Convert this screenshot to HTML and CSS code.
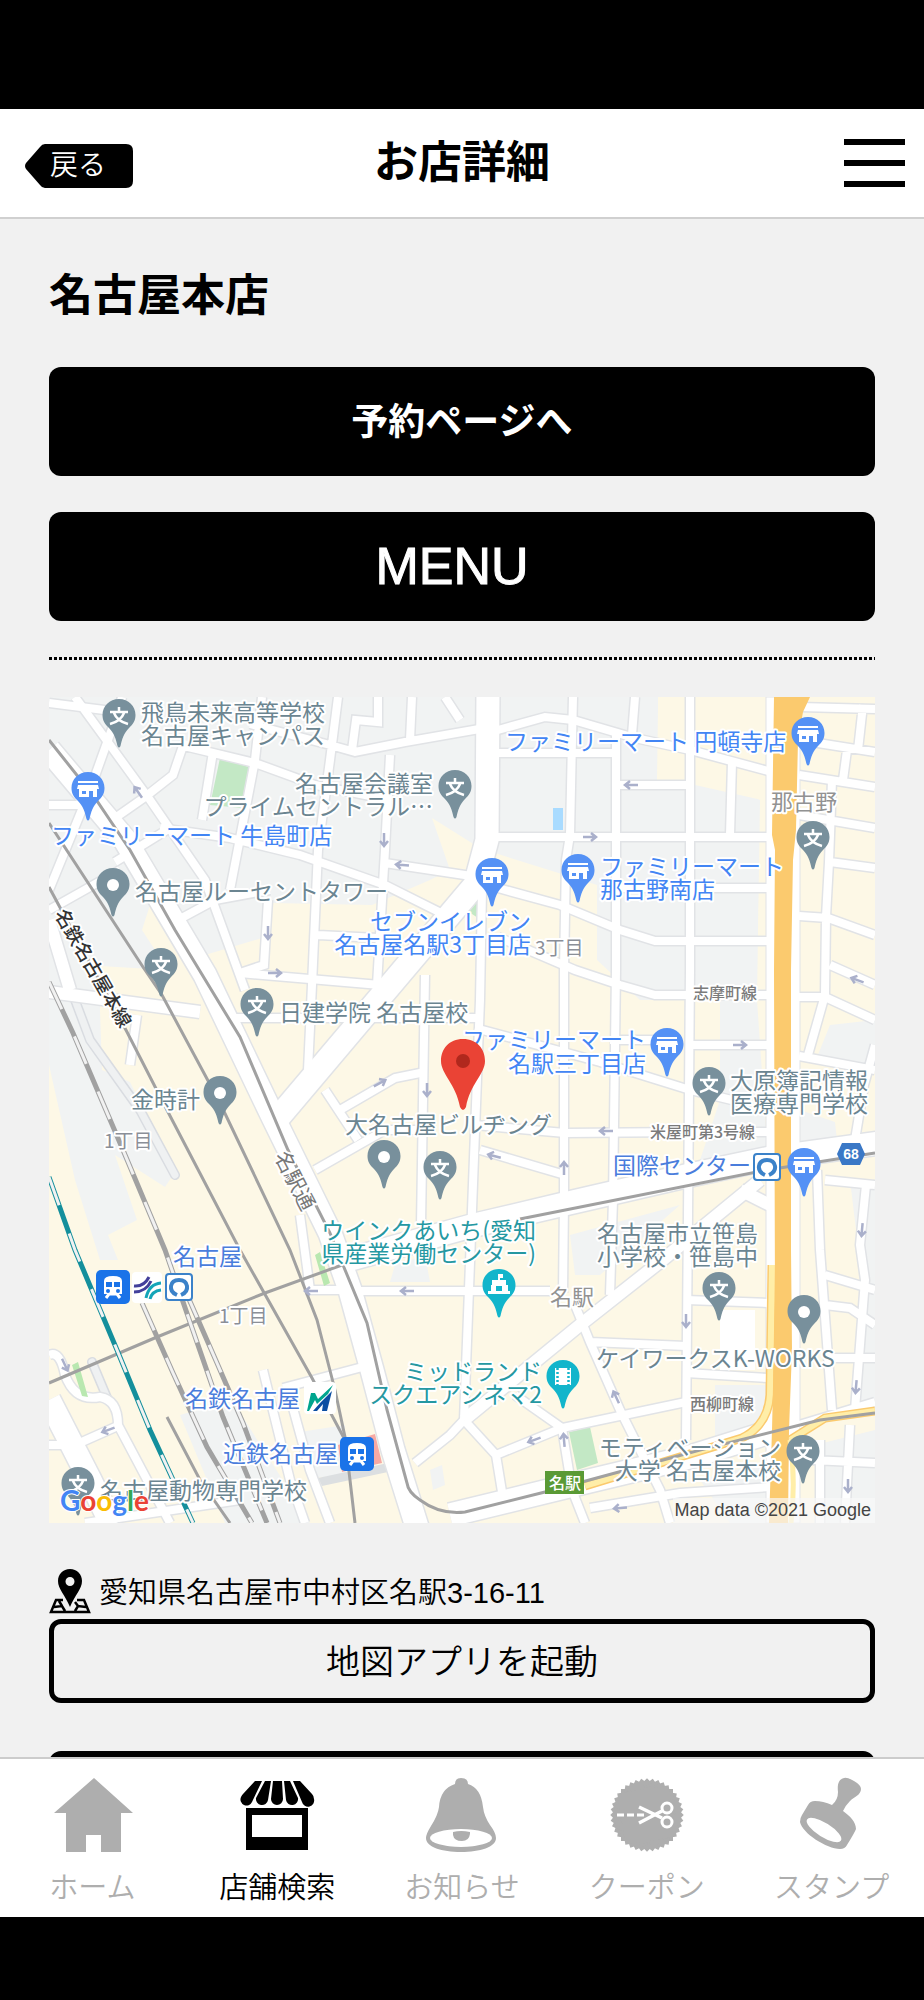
FILE: index.html
```html
<!DOCTYPE html>
<html lang="ja">
<head>
  <meta charset="UTF-8">
  <meta name="viewport" content="width=device-width, initial-scale=1.0">
  <title>お店詳細</title>
  <link rel="stylesheet" href="styles.css">
</head>
<body>
  <div class="app">
    <header class="header">
      <a class="back" href="#">
        <svg class="back-shape" viewBox="0 0 108 44" aria-hidden="true"><path d="M20 0H101Q108 0 108 7V37Q108 44 101 44H20Q17 44 15 41L1 25Q-1 22 1 19L15 3Q17 0 20 0Z"/></svg>
        <span>戻る</span>
      </a>
      <h1>お店詳細</h1>
      <button class="hamburger" type="button" aria-label="メニュー"><i></i><i></i><i></i></button>
    </header>

    <main class="main">
      <h2>名古屋本店</h2>
      <div class="actions">
        <a class="btn" href="#">予約ページへ</a>
        <a class="btn btn-en" href="#">MENU</a>
      </div>
      <hr class="dots">

      <svg class="map" viewBox="49 697 826 826" role="img" aria-label="名古屋本店の地図">
        <defs>
          <path id="pin" d="M0-17C9.500-17 16.500-10 16.500-1C16.500 5 14 8 10 12C5 17 3 23 1.500 30Q0 33-1.500 30C-3 23-5 17-10 12C-14 8-16.500 5-16.500-1C-16.500-10-9.500-17 0-17Z"/>
          <g id="school"><use href="#pin" fill="#78909c"/><path d="M0-9V-4M-9-4H9M-5-3Q-2 5 9 8M5-3Q2 5-9 8" fill="none" stroke="#fff" stroke-width="2.500"/></g>
          <g id="place"><use href="#pin" fill="#78909c"/><circle r="6" fill="#fff"/></g>
          <g id="shop"><use href="#pin" fill="#5491f5"/><path d="M-10-8H10V-6H-10ZM-10-4H10L11 0H-11ZM-9 0H9V8H5V2H1V8H-9ZM-6 2V5H-2V2Z" fill="#fff" fill-rule="evenodd"/></g>
          <path id="arrow" d="M-7 0H6M1-4L6 0L1 4" fill="none" stroke="#aab0cb" stroke-width="2.500"/>
          <g id="train"><rect width="34" height="34" rx="5" fill="#1a73e8"/><path d="M8 11Q8 6 17 6Q26 6 26 11V24H8ZM10 12V17H16V12ZM18 12V17H24V12Z" fill="#fff" fill-rule="evenodd"/><path d="M10 28L13 24H21L24 28" fill="none" stroke="#fff" stroke-width="3"/><circle cx="12" cy="21" r="2" fill="#1a73e8"/><circle cx="22" cy="21" r="2" fill="#1a73e8"/></g>
          <g id="metro"><rect x="1" y="1" width="26" height="26" rx="3" fill="#fff" stroke="#3b82c9" stroke-width="2"/><path d="M12 22Q5 19 6 13Q7 7 14 7Q21 7 22 13Q23 19 16 22" fill="none" stroke="#3b82c9" stroke-width="4"/></g>

          <!-- 道路 -->
          <g id="streets">
            <path d="M573 697L572 740L570 835L566 860L564 970L564 1200L563 1293M635 697L632 735M616 735V970L613 1200L610 1295M690 697V970L688 1215L686 1440M732 762L730 835"/>
            <path d="M498 753H615M498 730L545 717L573 720L635 738L690 750L772 772M618 785H690M498 837H772M498 888L560 905L620 930L655 941H770M616 888H772M498 937L575 970L620 985L655 995H772M690 1045H770M610 1040H670M475 1028L600 1062L690 1090L740 1102M475 1125L565 1133L690 1132H768M480 1150L565 1175"/>
            <path d="M482 890L480 1000L472 1210L464 1420M425 975L421 1225M345 1291H550M590 1342L686 1346M686 1300L770 1303M686 1373L768 1378M575 1305L590 1342L620 1410L660 1490L670 1523M590 1508L680 1493L770 1487M515 1395L562 1428L572 1490L585 1523M464 1420L496 1455L505 1510M496 1455L562 1428L686 1402"/>
            <path d="M800 707L875 709M863 705L858 750M847 750L843 780M799 740L875 752M799 775L875 787M799 815L875 828M832 780L829 862L826 917L825 995L808 1055M830 862L875 868M799 916L828 918L875 935M799 997H825L875 1020M799 1056L875 1070M830 965L875 985M875 1045L864 1085L855 1140M817 1170L820 1250L832 1410M875 1185L825 1180M866 1185L860 1245L865 1280L855 1410M825 1275L875 1290M825 1305L850 1308L875 1325M825 1358H875M799 1425L875 1402M812 1460L875 1463M850 1425L845 1523M820 1440V1523"/>
            <path d="M49 703L120 712M122 697L118 712L90 790L49 890M180 745L255 763L315 785L390 800M250 724L330 745L355 752L405 742L485 728M185 740L173 775L145 797L115 818M213 752L202 820M262 697L255 760L230 890M338 697L330 760L318 850L312 985L308 1070M390 755L385 850L377 985M378 697V722L356 720L352 750M412 697L410 740M445 697L460 720M49 805H85M160 828L230 838L300 855L385 885L445 915M115 862L170 828M49 910L120 870M178 920L215 900L270 890M268 900L264 965L240 973M385 863L478 877M318 935L378 938"/>
            <path d="M75 697L110 745L150 800L205 880L245 990M240 973L380 985M232 1018H478M340 1110L395 1078L425 1072M325 1090L358 1140M315 1170L385 1130L425 1130M137 1015L130 1065M263 1370L290 1480L305 1523M283 1388L370 1365M288 1390L310 1470L330 1523M49 1355Q60 1350 65 1375Q75 1402 100 1397Q118 1400 118 1425L170 1523M75 1445L120 1425M49 1445H85M85 1523L240 1500M415 1463L450 1435L464 1420M300 1215L310 1290H340"/>
          </g>
          <g id="avenues">
            <path d="M49 750L125 840L205 975L273 1117L330 1233L350 1290L372 1370L393 1450L418 1530"/>
            <path d="M488 690L487 840L475 885L278 1118"/>
            <path d="M340 1262L475 1225L560 1205L690 1175L770 1158L880 1143"/>
            <path d="M450 1515L585 1482L690 1457L770 1432"/>
            <path d="M49 1400L90 1480L112 1525"/>
          </g>
          <g id="diagonals">
            <path d="M464 1420L580 1325L660 1262L760 1180M740 1190L770 1205M49 920L70 990M49 992L200 1012"/>
          </g>
          <path id="yellow" d="M772 1265L770 1395Q768 1425 742 1438L585 1486M875 1411L825 1418L790 1440"/>
          <path id="railD" d="M49 982L73 1033L123 1150L165 1250L223 1417L267 1523"/>
          <path id="railE" d="M142 1303L173 1373L207 1447L252 1523"/>
          <path id="railF" d="M185 1290L217 1363L243 1423L280 1523"/>
          <path id="railT" d="M49 1177L75 1250L117 1350L150 1430L193 1523"/>
        </defs>

        <rect x="49" y="697" width="826" height="826" fill="#fdf8e6"/>
        <g fill="#f1f3f3">
          <path d="M49 697H658V780H725L760 800L757 1000L768 1160H700L720 1100V1000H640L597 960V885L498 854L475 845L432 818L450 870L430 880L372 905L272 903L262 938L205 955L190 970L150 905L142 930L168 970L100 966V1010L102 1070L130 1082L175 1172L165 1187L115 1155L137 1220L108 1235L118 1260H100L75 1180L49 1065Z"/>
          <path d="M830 1025L875 1020V1065L815 1062ZM800 1110L835 1122L838 1150H800ZM850 1180H875V1400H850L862 1280ZM815 1445L875 1430V1523H815ZM715 1385H768V1420L715 1438ZM570 1235L680 1205L600 1275H575ZM395 1265L425 1255L430 1282H390ZM700 1480L770 1460V1523H730Z"/>
          <path d="M180 1415L232 1400L310 1523H225ZM300 1432L345 1425V1475L312 1478ZM430 1470L442 1465L445 1485L433 1490Z"/>
        </g>
        <path d="M658 707L690 715V780H657ZM695 757L767 775V935H758L762 800L695 785ZM730 697H767V732L730 725ZM640 1005L720 1000V1100L640 1080Z" fill="#fdf8e6"/>
        <path d="M220 758L249 767L243 808L210 805ZM569 1432L590 1427L598 1463L577 1470ZM466 910L480 898L478 918Z" fill="#c3e8c5"/>
        <rect x="553" y="808" width="10" height="22" fill="#a9dbff"/>
        <path d="M338 1445L375 1434L382 1463L342 1472Z" fill="#f6a9a4"/>
        <path d="M318 1478L388 1463V1472L322 1486Z" fill="#dcdfe1"/>

        <path class="lane-edge" d="M75 1000L90 1040L140 1110L175 1175M92 1362L108 1400"/>
        <path class="lane" d="M75 1000L90 1040L140 1110L175 1175M92 1362L108 1400"/>
        <use class="road-edge w-street" href="#streets"/>
        <use class="road-edge w-diagonal" href="#diagonals"/>
        <use class="road-edge w-avenue" href="#avenues"/>
        <path d="M766 697H800V1523H766Z" fill="#fff" stroke="#e1e3e6"/>
        <use class="road w-street" href="#streets"/>
        <use class="road w-diagonal" href="#diagonals"/>
        <use class="road w-avenue" href="#avenues"/>
        <path d="M720 1310H755V1370H720Z" fill="#fff"/>
        <path d="M72 1365L78 1362L88 1397L82 1396ZM315 1255L320 1252L330 1283L324 1286Z" fill="#b9e8b0"/>

        <use class="yellow-edge" href="#yellow"/>
        <use class="yellow" href="#yellow"/>
        <path d="M774 697H810L803 712L798 740L796 830L793 860L791 970V1250L792 1350L789 1430L788 1523H769L772 1430L775 1300L774 970L775 850L772 835Z" fill="#fbca6e"/>
        <path d="M790 1440Q796 1480 791 1523" fill="none" stroke="#ffeea8" stroke-width="5"/>

        <g class="rail">
          <path d="M49 740L95 798L130 850L175 930L240 1037L288 1150L330 1233L343 1265L367 1323L387 1410L407 1483Q408 1492 420 1500Q440 1515 465 1512L545 1492L700 1450L820 1420L875 1413"/>
          <path d="M49 823L143 967L162 995L220 1103L290 1250L317 1320L335 1390L345 1437L355 1523"/>
          <path d="M49 887L127 1032L168 1112L240 1250L312 1378L345 1440"/>
          <path d="M49 1383L157 1337L265 1293L342 1265M520 1219L767 1170L875 1153"/>
          <path d="M167 1417L200 1480L230 1523"/>
        </g>
        <use class="rail-base" href="#railD"/><use class="rail-dash" href="#railD"/>
        <use class="rail-base" href="#railE"/><use class="rail-dash" href="#railE"/>
        <use class="rail-base" href="#railF"/><use class="rail-dash" href="#railF"/>
        <use class="rail-base teal" href="#railT"/><use class="rail-dash" href="#railT"/>

        <use href="#arrow" transform="translate(138 792) rotate(-125)"/>
        <use href="#arrow" transform="translate(384 840) rotate(90)"/>
        <use href="#arrow" transform="translate(402 865) rotate(185)"/>
        <use href="#arrow" transform="translate(268 933) rotate(90)"/>
        <use href="#arrow" transform="translate(275 973)"/>
        <use href="#arrow" transform="translate(631 785) rotate(180)"/>
        <use href="#arrow" transform="translate(590 837)"/>
        <use href="#arrow" transform="translate(380 1083) rotate(-28)"/>
        <use href="#arrow" transform="translate(427 1090) rotate(90)"/>
        <use href="#arrow" transform="translate(740 1045)"/>
        <use href="#arrow" transform="translate(857 980) rotate(200)"/>
        <use href="#arrow" transform="translate(606 1131) rotate(180)"/>
        <use href="#arrow" transform="translate(494 1156) rotate(195)"/>
        <use href="#arrow" transform="translate(564 1168) rotate(-90)"/>
        <use href="#arrow" transform="translate(862 1230) rotate(95)"/>
        <use href="#arrow" transform="translate(407 1291) rotate(180)"/>
        <use href="#arrow" transform="translate(311 1291) rotate(180)"/>
        <use href="#arrow" transform="translate(686 1321) rotate(90)"/>
        <use href="#arrow" transform="translate(616 1397) rotate(-115)"/>
        <use href="#arrow" transform="translate(564 1440) rotate(-95)"/>
        <use href="#arrow" transform="translate(534 1440) rotate(160)"/>
        <use href="#arrow" transform="translate(620 1508) rotate(175)"/>
        <use href="#arrow" transform="translate(856 1387) rotate(95)"/>
        <use href="#arrow" transform="translate(848 1486) rotate(90)"/>
        <use href="#arrow" transform="translate(65 1365) rotate(65)"/>
        <use href="#arrow" transform="translate(108 1430) rotate(160)"/>

        <use href="#school" x="119" y="716"/>
        <use href="#school" x="455" y="787"/>
        <use href="#school" x="813" y="838"/>
        <use href="#school" x="161" y="965"/>
        <use href="#school" x="257" y="1005"/>
        <use href="#school" x="709" y="1084"/>
        <use href="#school" x="440" y="1168"/>
        <use href="#school" x="719" y="1289"/>
        <use href="#school" x="803" y="1452"/>
        <use href="#school" x="78" y="1484"/>
        <use href="#place" x="113" y="885"/>
        <use href="#place" x="220" y="1093"/>
        <use href="#place" x="384" y="1157"/>
        <use href="#place" x="804" y="1312"/>
        <use href="#shop" x="88" y="789"/>
        <use href="#shop" x="808" y="734"/>
        <use href="#shop" x="492" y="875"/>
        <use href="#shop" x="578" y="871"/>
        <use href="#shop" x="667" y="1045"/>
        <use href="#shop" x="804" y="1165"/>
        <g transform="translate(499 1286)"><use href="#pin" fill="#12b5cb"/><path d="M-1-12H4V-8H1V-6H7V-1H9V5H11V8H-11V5H-8V-1H-7V-6H-1ZM-3 0V5H3V0Z" fill="#fff" fill-rule="evenodd"/></g>
        <g transform="translate(563 1377)"><use href="#pin" fill="#12b5cb"/><rect x="-8" y="-9" width="16" height="17" fill="#fff"/><path d="M-5.500-9V8M5.500-9V8" stroke="#12b5cb" stroke-width="2.500" stroke-dasharray="2 2"/></g>

        <g class="label poi">
          <text x="141" y="721">飛鳥未来高等学校</text>
          <text x="141" y="744">名古屋キャンパス</text>
          <text class="end" x="433" y="792">名古屋会議室</text>
          <text class="end" x="433" y="815">プライムセントラル…</text>
          <text x="135" y="900">名古屋ルーセントタワー</text>
          <text x="279" y="1021">日建学院 名古屋校</text>
          <text x="730" y="1089">大原簿記情報</text>
          <text x="730" y="1112">医療専門学校</text>
          <text x="345" y="1133">大名古屋ビルヂング</text>
          <text x="131" y="1108">金時計</text>
          <text x="597" y="1242">名古屋市立笹島</text>
          <text x="597" y="1265">小学校・笹島中</text>
          <text x="596" y="1367">ケイワークスK-WORKS</text>
          <text class="end" x="781" y="1456">モティベーション</text>
          <text class="end" x="781" y="1479">大学 名古屋本校</text>
          <text x="100" y="1499">名古屋動物専門学校</text>
        </g>
        <g class="label store">
          <text x="51" y="844">ファミリーマート 牛島町店</text>
          <text x="505" y="750">ファミリーマート 円頓寺店</text>
          <text x="600" y="875">ファミリーマート</text>
          <text x="600" y="898">那古野南店</text>
          <text class="end" x="531" y="930">セブンイレブン</text>
          <text class="end" x="531" y="953">名古屋名駅3丁目店</text>
          <text class="end" x="646" y="1048">ファミリーマート</text>
          <text class="end" x="646" y="1072">名駅三丁目店</text>
        </g>
        <g class="label station">
          <text x="613" y="1174">国際センター</text>
          <text x="173" y="1265">名古屋</text>
          <text x="185" y="1407">名鉄名古屋</text>
          <text x="223" y="1462">近鉄名古屋</text>
        </g>
        <g class="label culture">
          <text class="end" x="536" y="1239">ウインクあいち(愛知</text>
          <text class="end" x="536" y="1262">県産業労働センター)</text>
          <text class="end" x="542" y="1380">ミッドランド</text>
          <text class="end" x="542" y="1403">スクエアシネマ2</text>
        </g>
        <g class="label area">
          <text x="771" y="810">那古野</text>
          <text x="550" y="1305">名駅</text>
        </g>
        <g class="label block">
          <text x="535" y="955">3丁目</text>
          <text x="104" y="1148">1丁目</text>
          <text x="219" y="1323">1丁目</text>
        </g>
        <g class="label street">
          <text x="693" y="999">志摩町線</text>
          <text x="650" y="1138">米屋町第3号線</text>
          <text x="690" y="1410">西柳町線</text>
        </g>
        <text class="label line-name" transform="translate(54 914) rotate(60)">名鉄名古屋本線</text>
        <text class="label avenue-name" transform="translate(274 1156) rotate(63)">名駅通</text>

        <use href="#train" x="96" y="1270"/>
        <use href="#train" x="340" y="1437"/>
        <use href="#metro" x="165" y="1273"/>
        <use href="#metro" x="753" y="1153"/>
        <rect x="132" y="1272" width="30" height="31" rx="4" fill="#fff"/>
        <path d="M134 1286Q144 1287 149 1277M134 1292Q146 1292 151 1281" fill="none" stroke="#43409a" stroke-width="3"/>
        <path d="M146 1298Q149 1284 161 1283M150 1299Q152 1291 161 1290" fill="none" stroke="#14a5b8" stroke-width="3"/>
        <rect x="304" y="1382" width="32" height="32" rx="4" fill="#fff"/>
        <path d="M307 1411L311 1393H315L318 1399L333 1385L328 1394L317 1404L315 1400L309 1411Z" fill="#00a58e"/>
        <path d="M313 1411L321 1402L332 1391L327 1411H322L323 1404L317 1411Z" fill="#0b4ea2"/>
        <path d="M842 1143H860L865 1154L860 1165H842L837 1154Z" fill="#3a78c6"/>
        <text class="route-no" x="851" y="1159">68</text>
        <rect x="545" y="1471" width="39" height="23" fill="#5a9a35"/>
        <text class="exit" x="565" y="1489">名駅</text>

        <path d="M463 1039C477 1039 485 1049 485 1061C485 1074 470 1084 466 1107Q463 1113 460 1107C456 1084 441 1074 441 1061C441 1049 449 1039 463 1039Z" fill="#ea4335"/>
        <circle cx="463" cy="1061" r="7" fill="#b0281d"/>

        <text class="google" x="60" y="1511"><tspan fill="#4285f4">G</tspan><tspan fill="#ea4335">o</tspan><tspan fill="#fbbc04">o</tspan><tspan fill="#4285f4">g</tspan><tspan fill="#34a853">l</tspan><tspan fill="#ea4335">e</tspan></text>
        <rect x="673" y="1498" width="202" height="25" fill="#f8f8f8" fill-opacity="0.7"/>
        <text class="credit" x="871" y="1516">Map data ©2021 Google</text>
      </svg>

      <p class="address">
        <svg class="address-icon" viewBox="0 0 42 45" aria-hidden="true">
          <path d="M21 0C28 0 33 5 33 12C33 20 26 26 21 38C16 26 9 20 9 12C9 5 14 0 21 0ZM21 8A4.500 4.500 0 0 0 21 17A4.500 4.500 0 0 0 21 8Z" fill-rule="evenodd"/>
          <path d="M14 31H7L2 43H40L35 31H28M5 38L13 37L16 42M10 32L13 37M37 38L29 37L26 42M29 37L26 33" fill="none" stroke="#000" stroke-width="2.500"/>
        </svg>
        <span>愛知県名古屋市中村区名駅3-16-11</span>
      </p>
      <button class="btn-line" type="button">地図アプリを起動</button>
      <button class="btn-line next" type="button" aria-label="電話をかける"></button>
    </main>

    <nav class="nav">
      <a href="#">
        <svg viewBox="0 0 80 80" aria-hidden="true"><path d="M42 3L81 38H69V77H49V60H34V77H14V38H2Z"/></svg>
        <span>ホーム</span>
      </a>
      <a class="active" href="#">
        <svg viewBox="0 0 80 80" aria-hidden="true">
          <path d="M18 6H25L15 27A6 6 0 0 1 4 22Q5 20 6 19ZM28 6H34L31 25A6 6 0 0 1 19 23ZM36 6H45L46 24A6 6 0 0 1 34 24ZM47 6H53L61 23A6 6 0 0 1 49 25ZM56 6H63L75 19Q77 21 77 24A6 6 0 0 1 65 27Z"/>
          <path d="M9 33H71V75H9ZM15 40V62H65V40Z" fill-rule="evenodd"/>
        </svg>
        <span>店舗検索</span>
      </a>
      <a href="#">
        <svg viewBox="0 0 80 80" aria-hidden="true">
          <path d="M33 9Q33 3 39 3Q46 3 46 9Q59 13 61 32Q62 41 68 50Q74 58 74 63C74 72 58 77 39 77C20 77 4 72 4 63Q4 59 9 51Q16 40 17 32Q18 14 33 9Z"/>
          <ellipse cx="39" cy="63" rx="31" ry="9" fill="#fff"/>
          <path d="M31 57Q39 55 48 57V59Q47 66 40 66Q32 66 31 60Z"/>
        </svg>
        <span>お知らせ</span>
      </a>
      <a href="#">
        <svg viewBox="0 0 80 80" aria-hidden="true">
          <defs><rect id="tooth" x="14" y="14" width="52" height="52"/></defs>
          <use href="#tooth"/>
          <use href="#tooth" transform="rotate(9 40 40)"/>
          <use href="#tooth" transform="rotate(18 40 40)"/>
          <use href="#tooth" transform="rotate(27 40 40)"/>
          <use href="#tooth" transform="rotate(36 40 40)"/>
          <use href="#tooth" transform="rotate(45 40 40)"/>
          <use href="#tooth" transform="rotate(54 40 40)"/>
          <use href="#tooth" transform="rotate(63 40 40)"/>
          <use href="#tooth" transform="rotate(72 40 40)"/>
          <use href="#tooth" transform="rotate(81 40 40)"/>
          <g fill="none" stroke="#fff" stroke-width="3">
            <path d="M10 40H37" stroke-dasharray="7 3"/>
            <path d="M32 32L55 43M32 48L55 36" stroke-width="3.500"/>
            <circle cx="60" cy="33" r="5"/>
            <circle cx="60" cy="47" r="5"/>
          </g>
        </svg>
        <span>クーポン</span>
      </a>
      <a href="#">
        <svg viewBox="0 0 80 80" aria-hidden="true">
          <path d="M52 3Q55 2 62 6Q69 10 69 14C69 20 62 22 58 26Q53 31 51 36C58 41 64 47 64 54Q63 57 55 70Q53 74 48 74C35 74 10 58 8 47Q8 43 10 40L16 30Q18 26 23 26Q31 26 40 30Q46 25 46 17C45 9 47 4 52 3Z"/>
          <ellipse cx="32" cy="55" rx="20" ry="7" transform="rotate(32 32 55)" fill="#fff"/>
        </svg>
        <span>スタンプ</span>
      </a>
    </nav>
  </div>
</body>
</html>
```
FILE: styles.css
```css
* { box-sizing: border-box; }
body {
  margin: 0;
  background: #000;
  color: #000;
  font-family: "Liberation Sans", "Noto Sans CJK JP", sans-serif;
}
a { color: inherit; text-decoration: none; }

.app {
  display: flex;
  flex-direction: column;
  height: 100vh;
  padding: 109px 0 83px;
}

/* ヘッダー */
.header {
  display: grid;
  grid-template-columns: 1fr auto 1fr;
  align-items: center;
  flex: none;
  height: 110px;
  padding: 0 19px;
  background: #fff;
  border-bottom: 2px solid #d0d0d0;
}
.header h1 { margin: 0; font-size: 44px; line-height: 64px; }
.back {
  position: relative;
  justify-self: start;
  width: 108px;
  margin: 6px 0 0 6px;
  padding-left: 25px;
  color: #fff;
  font-size: 28px;
  font-weight: 350;
  line-height: 44px;
}
.back-shape { position: absolute; top: 0; left: 0; width: 100%; height: 100%; }
.back span { position: relative; }
.hamburger {
  display: flex;
  flex-direction: column;
  justify-self: end;
  gap: 15px;
  width: 61px;
  padding: 0;
  border: 0;
  background: none;
}
.hamburger i { height: 6px; background: #000; }

/* 店舗情報 */
.main {
  flex: 1;
  min-height: 0;
  overflow: hidden;
  padding: 44px 49px 0;
  background: #f1f1f1;
}
.main h2 { margin: 0 0 38px; font-size: 44px; line-height: 66px; }
.actions { display: flex; flex-direction: column; gap: 36px; }
.btn {
  height: 109px;
  border-radius: 12px;
  background: #000;
  color: #fff;
  font-size: 37px;
  font-weight: 700;
  line-height: 112px;
  text-align: center;
}
.btn-en {
  padding-right: 20px;
  font-size: 52px;
  font-weight: 400;
  line-height: 108px;
  -webkit-text-stroke: 1px #fff;
}
.dots {
  height: 3px;
  margin: 36px 0 37px;
  border: 0;
  background: repeating-linear-gradient(90deg, #000 0 3px, #f1f1f1 3px 5px);
}
.address {
  display: flex;
  gap: 8px;
  margin: 46px 0 0;
  height: 50px;
  font-size: 29px;
  line-height: 48px;
  font-weight: 350;
}
.address-icon { flex: none; width: 42px; height: 45px; }
.btn-line {
  display: block;
  width: 100%;
  height: 84px;
  padding: 0 0 4px;
  border: 5px solid #000;
  border-radius: 12px;
  background: none;
  color: #000;
  font-family: inherit;
  font-size: 34px;
  font-weight: 350;
}
.next { margin-top: 48px; background: #000; }

/* 地図 */
.map { display: block; width: 100%; }
.road, .road-edge, .lane, .lane-edge, .yellow, .yellow-edge,
.rail, .rail-base, .rail-dash { fill: none; }
.road { stroke: #fff; }
.road-edge { stroke: #e1e3e6; }
.road.w-street { stroke-width: 8px; }
.road-edge.w-street { stroke-width: 11px; }
.road.w-diagonal { stroke-width: 12px; }
.road-edge.w-diagonal { stroke-width: 15px; }
.road.w-avenue { stroke-width: 23px; }
.road-edge.w-avenue { stroke-width: 26px; }
.lane { stroke: #eff1f2; stroke-width: 7px; stroke-linecap: round; }
.lane-edge { stroke: #d9dce1; stroke-width: 10px; stroke-linecap: round; }
.yellow { stroke: #ffeea8; stroke-width: 6px; }
.yellow-edge { stroke: #fbca6e; stroke-width: 9px; }
.rail { stroke: #a1a1a1; stroke-width: 3px; }
.rail-base { stroke: #a1a1a1; stroke-width: 5px; }
.rail-base.teal { stroke: #148f9c; }
.rail-dash { stroke: #f1f1f1; stroke-width: 3px; stroke-dasharray: 30px 30px; }

.label {
  font-family: "Noto Sans CJK JP", sans-serif;
  font-size: 23px;
  stroke: #fff;
  stroke-width: 4px;
  stroke-linejoin: round;
  paint-order: stroke;
}
.end { text-anchor: end; }
.poi { fill: #6b8591; }
.store { fill: #4285f4; }
.station { fill: #4a7ddc; }
.culture { fill: #2598a2; }
.area { fill: #929292; font-size: 22px; }
.block { fill: #8b8f98; font-size: 19px; }
.street { fill: #7b7b7b; font-size: 16px; font-weight: 500; }
.line-name { fill: #333; font-size: 19px; font-weight: 500; }
.avenue-name { fill: #777; font-size: 21px; }
.route-no, .exit { fill: #fff; font-size: 14px; font-weight: 700; text-anchor: middle; }
.exit { font-size: 16px; font-weight: 500; }
.google {
  font-family: Lato, sans-serif;
  font-size: 28px;
  font-weight: 700;
  stroke: #fff;
  stroke-width: 2px;
  paint-order: stroke;
}
.credit { fill: #444; font-size: 18px; text-anchor: end; }

/* タブバー */
.nav {
  display: grid;
  grid-template-columns: repeat(5, 1fr);
  flex: none;
  height: 160px;
  border-top: 2px solid #ccc;
  background: #fff;
}
.nav a {
  display: flex;
  flex-direction: column;
  align-items: center;
  gap: 12px;
  padding-top: 16px;
  color: #aeaeae;
  fill: #aeaeae;
  font-size: 29px;
  font-weight: 350;
  line-height: 42px;
}
.nav svg { width: 80px; height: 80px; overflow: visible; }
.nav .active { color: #000; fill: #000; }
```
